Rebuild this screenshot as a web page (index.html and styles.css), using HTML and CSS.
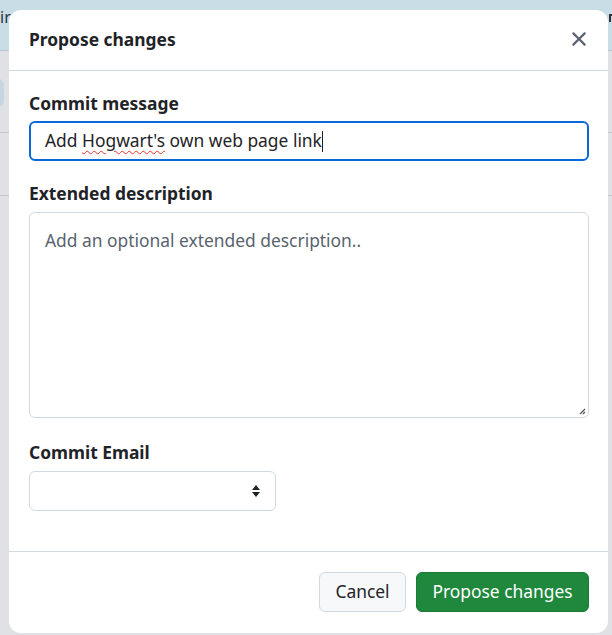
FILE: index.html
```html
<!DOCTYPE html>
<html>
<head>
<meta charset="utf-8">
<link rel="stylesheet" href="styles.css">
</head>
<body>
<div class="page">
  <div class="page-top"><span class="page-text">ir</span><span class="page-mark"></span></div>
  <div class="page-main">
    <div class="page-pill"></div>
    <div class="page-line l1"></div>
    <div class="page-line l2"></div>
  </div>
</div>
<div class="modal">
  <div class="modal-header">
    <h2 class="modal-title">Propose changes</h2>
    <button class="close-btn" aria-label="Close">
      <svg width="24" height="24" viewBox="0 0 16 16"><path d="M3.72 3.72a.75.75 0 0 1 1.06 0L8 6.94l3.22-3.22a.75.75 0 1 1 1.06 1.06L9.06 8l3.22 3.22a.75.75 0 1 1-1.06 1.06L8 9.06l-3.22 3.22a.75.75 0 0 1-1.06-1.06L6.94 8 3.72 4.78a.75.75 0 0 1 0-1.06Z" fill="#59636e"/></svg>
    </button>
  </div>
  <div class="modal-body">
    <label class="field-label">Commit message</label>
    <div class="text-input focused">Add <span class="misspelled">Hogwart's</span> own web page link<span class="caret"></span></div>
    <label class="field-label second">Extended description</label>
    <div class="textarea">
      <span class="placeholder">Add an optional extended description..</span>
      <svg class="resize" width="8" height="8" viewBox="0 0 8 8"><path d="M7 2 L2 7 M7 5 L5 7" stroke="#555" stroke-width="1.3"/></svg>
    </div>
    <label class="field-label third">Commit Email</label>
    <div class="select">
      <svg class="select-caret" width="10" height="14" viewBox="0 0 10 14"><path d="M5 1 L9 6 H1 Z M5 13 L9 8 H1 Z" fill="#1f2328"/></svg>
    </div>
  </div>
  <div class="modal-footer">
    <button class="btn btn-default">Cancel</button>
    <button class="btn btn-primary">Propose changes</button>
  </div>
</div>
</body>
</html>
```
FILE: styles.css
```css
* { box-sizing: border-box; }
html, body { margin: 0; padding: 0; }
body {
  width: 612px;
  height: 635px;
  overflow: hidden;
  position: relative;
  font-family: "Noto Sans", "Open Sans", sans-serif;
  background: #dfe1e4;
  color: #1f2328;
}
.page { width: 612px; height: 635px; }
.page-top {
  height: 51px;
  background: #c9dde7;
  border-bottom: 1px solid #b9c6cf;
  position: relative;
}
.page-text {
  position: absolute;
  left: 0;
  top: 5px;
  font-size: 16px;
  line-height: 24px;
  color: #2d3338;
}
.page-mark {
  position: absolute;
  left: 609px;
  top: 14px;
  width: 3px;
  height: 8px;
  border-top: 2px solid #2d3338;
  border-left: 2px solid #2d3338;
}
.page-main { position: relative; height: 584px; }
.page-pill {
  position: absolute;
  left: -10px;
  top: 28px;
  width: 14px;
  height: 28px;
  border-radius: 6px;
  background: #c6d7e1;
}
.page-line {
  position: absolute;
  left: 0;
  width: 612px;
  height: 1px;
  background: #c5c9cd;
}
.l1 { top: 81px; }
.l2 { top: 144px; }

.modal {
  position: absolute;
  left: 9px;
  top: 10px;
  width: 599px;
  height: 623px;
  background: #ffffff;
  border-radius: 12px;
  display: flex;
  flex-direction: column;
  overflow: hidden;
}
.modal-header {
  height: 61px;
  display: flex;
  align-items: center;
  justify-content: space-between;
  padding: 0 17px 3px 20px;
  border-bottom: 1px solid #d1d9e0;
  flex-shrink: 0;
}
.modal-title {
  margin: 0;
  font-size: 17.4px;
  font-weight: 700;
  line-height: 24px;
}
.close-btn {
  border: 0;
  background: transparent;
  padding: 0;
  width: 24px;
  height: 24px;
  display: flex;
}
.modal-body {
  flex: 1;
  padding: 20px 20px 0 20px;
  display: flex;
  flex-direction: column;
  align-items: flex-start;
}
.field-label {
  font-size: 17.4px;
  font-weight: 700;
  line-height: 24px;
  display: block;
  margin-bottom: 6px;
}
.field-label.second { margin-top: 20px; margin-bottom: 7px; }
.field-label.third { margin-top: 22px; margin-bottom: 7px; }
.text-input {
  width: 560px;
  height: 40px;
  border: 2px solid #0969da;
  border-radius: 6px;
  padding: 0 14px;
  font-size: 17.4px;
  line-height: 35px;
  color: #1f2328;
  white-space: nowrap;
}
.misspelled {
  text-decoration: underline wavy #e5312c;
  text-decoration-thickness: 1px;
  text-underline-offset: 3px;
}
.caret {
  display: inline-block;
  width: 1px;
  height: 21px;
  background: #1f2328;
  vertical-align: -5px;
}
.textarea {
  width: 560px;
  height: 206px;
  border: 1px solid #d1d9e0;
  border-radius: 6px;
  padding: 15px 15px;
  position: relative;
  font-size: 17.4px;
  line-height: 24px;
}
.placeholder { color: #59636e; }
.resize {
  position: absolute;
  right: 2px;
  bottom: 2px;
}
.select {
  width: 247px;
  height: 40px;
  border: 1px solid #d1d9e0;
  border-radius: 6px;
  position: relative;
}
.select-caret {
  position: absolute;
  right: 14px;
  top: 12px;
}
.modal-footer {
  height: 82px;
  border-top: 1px solid #d1d9e0;
  display: flex;
  justify-content: flex-end;
  align-items: flex-start;
  padding: 20px 19px 0 0;
  gap: 10px;
  flex-shrink: 0;
}
.btn {
  height: 40px;
  border-radius: 6px;
  font-family: "Noto Sans", "Open Sans", sans-serif;
  font-size: 17.4px;
  padding: 0 0 2px 0;
  line-height: 34px;
}
.btn-default {
  width: 87px;
  background: #f6f8fa;
  border: 1px solid #d1d9e0;
  color: #1f2328;
}
.btn-primary {
  width: 173px;
  background: #1f883d;
  border: 1px solid #1c7a37;
  color: #ffffff;
}
```
